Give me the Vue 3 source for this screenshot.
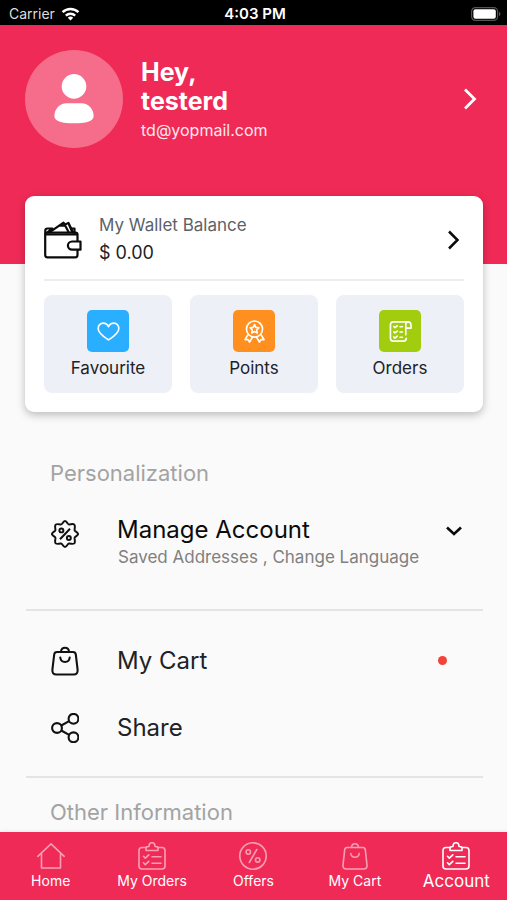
<script setup>
import { ref } from 'vue'

const active = ref('Account')
const shortcuts = [
  { label: 'Favourite', icon: 'heart', tone: 'blue' },
  { label: 'Points', icon: 'medal', tone: 'orange' },
  { label: 'Orders', icon: 'receipt', tone: 'green' },
]
const tabs = [
  { label: 'Home', icon: 'home' },
  { label: 'My Orders', icon: 'clipboard' },
  { label: 'Offers', icon: 'percent' },
  { label: 'My Cart', icon: 'bag' },
  { label: 'Account', icon: 'clipboard' },
]
</script>

<template>
  <div class="screen">
    <div class="status">
      <div class="carrier">
        <span>Carrier</span>
        <svg class="wifi" viewBox="0 0 20 15" fill="none" stroke="#fff" stroke-width="2.6">
          <path d="M1.5 5.6a12 12 0 0 1 17 0" />
          <path d="M5 9.3a7.1 7.1 0 0 1 10 0" />
          <path d="M10 14.4 7.1 11.6a4.1 4.1 0 0 1 5.8 0Z" fill="#fff" stroke="none" />
        </svg>
      </div>
      <strong class="clock">4:03 PM</strong>
      <svg class="battery" viewBox="0 0 30 14">
        <rect x=".6" y=".6" width="26" height="12.8" rx="3.8" fill="none" stroke="#555" stroke-width="1.2" />
        <rect x="2.4" y="2.2" width="22.4" height="9.6" rx="2" fill="#fff" />
        <path d="M28 4.8c2 .8 2 3.6 0 4.4Z" fill="#555" />
      </svg>
    </div>

    <header class="hero">
      <div class="avatar">
        <svg viewBox="0 0 40 50" fill="#fff">
          <circle cx="20" cy="12.4" r="12.3" />
          <path d="M12.5 29.2h15C34.5 29.2 39.6 35 39.6 42c0 5.5-8 7.3-19.6 7.3S.4 47.5.4 42c0-7 5.1-12.8 12.1-12.8Z" />
        </svg>
      </div>
      <div class="who">
        <h1>Hey,<br />testerd</h1>
        <p>td@yopmail.com</p>
      </div>
      <button class="plain" type="button" aria-label="Edit profile">
        <svg class="chev" viewBox="0 0 20 24" fill="none" stroke="#fff" stroke-width="2.8"><path d="m5 2.5 9.5 9.5L5 21.500" /></svg>
      </button>
    </header>

    <main>
      <section class="card">
        <button class="plain wallet" type="button">
          <svg class="wallet-icon" viewBox="1 0 38 38" fill="none" stroke="#0b0b0b" stroke-width="2.2" stroke-linejoin="round" stroke-linecap="round">
            <path d="M34.500 20v-6.500q0-2-2-2H4.200q-2 0-2 2V34q0 2.300 2.300 2.300H32.200q2.300 0 2.300-2.300v-5" />
            <path d="M2.500 13.300h31.500" />
            <path d="M2.300 12V9.500Q2.300 7.500 4.500 7.500h5M29 7.500h2.500V12M5 11l4-3" />
            <path d="M6.500 11.300 20.500 1.600l5.200 9.700M16.500 4.700h5.500M22.500 3.200l3-1.200 4.500 9.300M26 3.500l3 7" />
            <path d="M29 20.500h8.500v8.200H29a4.100 4.100 0 0 1 0-8.200Z" />
          </svg>
          <span class="wallet-text">
            <span class="muted">My Wallet Balance</span>
            <span class="amount">$ 0.00</span>
          </span>
          <svg class="chev" viewBox="0 0 20 24" fill="none" stroke="#0b0b0b" stroke-width="2.5"><path d="m5 3.500 8.500 8.500L5 20.500" /></svg>
        </button>
        <div class="tiles">
          <button v-for="s in shortcuts" :key="s.label" class="tile" type="button">
            <span class="badge" :class="s.tone">
              <svg viewBox="0 0 24 24" fill="none" stroke="currentColor" stroke-width="1.7" stroke-linecap="round" stroke-linejoin="round">
                <path v-if="s.icon === 'heart'" d="M12 20.800C7.800 18 1.200 13.800 1.200 8.800c0-3.200 2.400-5.600 5.200-5.600 2.500 0 4.600 1.500 5.600 3.800 1-2.300 3.100-3.800 5.600-3.800 2.800 0 5.200 2.400 5.200 5.600 0 5-6.600 9.200-10.800 12Z" />
                <g v-else-if="s.icon === 'medal'">
                  <circle cx="12" cy="9.500" r="8.400" />
                  <path d="m12 4.800 1.400 2.900 3.200.4-2.300 2.200.6 3.200-2.900-1.500-2.900 1.500.6-3.200-2.300-2.200 3.200-.4Z" />
                  <path d="m5.300 15.200-3.300 5.300 3.200-.2 1.600 2.700 3.200-5.200M18.700 15.200l3.300 5.300-3.200-.2-1.600 2.700-3.200-5.200" />
                </g>
                <g v-else>
                  <path d="M20.500 2H4.500Q1.500 2 1.500 5v14q0 3 3 3h10.500q3 0 3-3" />
                  <path d="M17.500 15.500V5q0-3 2.500-3t3 3v3.500h-5" />
                  <path d="m5 6.800 1.200 1.200L8.600 6m-3.600 6.300 1.200 1.200 2.400-2m-3.600 6.200 1.200 1.200 2.400-2M11.500 7H14M11.500 12.500H14M11.500 18H14" />
                </g>
              </svg>
            </span>
            <span>{{ s.label }}</span>
          </button>
        </div>
      </section>

      <h2>Personalization</h2>
      <section class="group first">
        <button class="plain row tall" type="button">
          <svg class="icon" viewBox="0 0 24 24" fill="none" stroke="#111" stroke-width="1.7" stroke-linejoin="round">
            <path d="M12 .8q.9 0 2.500 2.400.5.700 1.300.6Q19.200 3.100 20 4t.200 4.200q-.1.800.6 1.300Q23.200 11.100 23.200 12t-2.400 2.500q-.7.500-.6 1.300.6 3.400-.2 4.200t-4.200.2q-.8-.1-1.300.6Q12.900 23.200 12 23.200t-2.500-2.400q-.5-.7-1.300-.6-3.400.6-4.200-.2t-.2-4.200q.1-.8-.6-1.300Q.8 12.900.8 12t2.400-2.500q.7-.5.600-1.300Q3.200 4.800 4 4t4.200-.2q.8.100 1.300-.6Q11.100.8 12 .8Z" />
            <circle cx="8.900" cy="8.900" r="1.700" /><circle cx="15.300" cy="15.400" r="1.700" /><path d="m16.300 7.500-8.600 9" />
          </svg>
          <span class="row-text">
            <span class="title dark">Manage Account</span>
            <span class="sub">Saved Addresses , Change Language</span>
          </span>
          <svg class="down" viewBox="0 0 18 12" fill="none" stroke="#0b0b0b" stroke-width="2.6"><path d="m2 2.500 7 6.500 7-6.500" /></svg>
        </button>
      </section>

      <section class="group">
        <button class="plain row" type="button">
          <svg class="icon" viewBox="0 0 28 30" fill="none" stroke="#111" stroke-width="2.1" stroke-linejoin="round" stroke-linecap="round">
            <path d="M6 6h16q2.500 0 2.800 2.500l1.800 15.200q.4 4.800-4 4.800H5.400q-4.400 0-4-4.800L3.200 8.500Q3.500 6 6 6ZM10 5.500c.5-5 7.500-5 8 0M9.300 11.500c.6 6 8.800 6 9.400 0" />
          </svg>
          <span class="title">My Cart</span>
          <span class="dot" role="status" aria-label="New items"></span>
        </button>
        <button class="plain row" type="button">
          <svg class="icon" viewBox="0 0 28 30" fill="none" stroke="#111" stroke-width="2.1">
            <circle cx="6" cy="15" r="4.900" /><circle cx="22.500" cy="5.800" r="4.900" /><circle cx="22.500" cy="24.300" r="4.900" />
            <path d="m10.300 12.500 7.800-4.300M10.300 17.500l7.800 4.300" />
          </svg>
          <span class="title">Share</span>
        </button>
      </section>
      <h2 class="other">Other Information</h2>
    </main>

    <nav>
      <button v-for="t in tabs" :key="t.label" type="button" class="tab" :class="{ active: active === t.label }" @click="active = t.label">
        <svg viewBox="0 0 28 28" fill="none" stroke="currentColor" stroke-width="1.6" stroke-linecap="round" stroke-linejoin="round">
          <path v-if="t.icon === 'home'" d="M4.500 12V26h19V12M.8 14.300 14 1.800l13.200 12.500" />
          <g v-else-if="t.icon === 'clipboard'">
            <path d="M8.500 5.500H4Q1 5.500 1 8.500V24q0 3 3 3h20q3 0 3-3V8.500q0-3-3-3h-4.500" />
            <path d="M8 8.500V6q0-1.500 3-1.500c0-5 6-5 6 0q3 0 3 1.500v2.500Z" />
            <path d="m5.500 14.300 1.800 1.800 3.500-3.300m-5.300 8 1.800 1.800 3.500-3.300M14 14.800h9M14 21.300h9" />
          </g>
          <g v-else-if="t.icon === 'percent'">
            <circle cx="14" cy="14" r="13.200" /><circle cx="9.300" cy="10" r="2.200" /><circle cx="18.700" cy="18" r="2.200" /><path d="M17.800 7.500 10.300 20.500" />
          </g>
          <path v-else d="M6 5.500h16q2 0 2.300 2.200l1.700 15.500q.3 3.800-3.500 3.800h-17Q1.700 27 2 23.200L3.700 7.700Q4 5.500 6 5.500ZM10.500 5.300c.4-4.800 6.600-4.800 7 0M9.800 11.500c.6 5 7.800 5 8.400 0" />
        </svg>
        <span>{{ t.label }}</span>
      </button>
    </nav>
  </div>
</template>

<style>
body {
  margin: 0;
  background: #fafafa;
}
</style>

<style scoped>
.screen {
  display: flex;
  flex-direction: column;
  min-height: 100vh;
  font-family: Inter, "Liberation Sans", sans-serif;
  color: #202225;
}
button {
  font: inherit;
  color: inherit;
  border: 0;
  padding: 0;
  cursor: pointer;
}
svg { display: block; flex: none; }
.plain { background: none; text-align: left; }
.status {
  display: grid;
  grid-template-columns: 1fr auto 1fr;
  align-items: center;
  height: 25px;
  padding: 2px 6px 0 9px;
  box-sizing: border-box;
  background: #000;
  color: #fff;
  font-size: 14px;
}
.carrier { display: flex; align-items: center; gap: 6px; color: #ddd; }
.wifi { width: 19px; height: 14px; }
.clock { font-size: 15px; font-weight: 600; }
.battery { width: 30px; height: 14px; justify-self: end; }
.hero {
  display: flex;
  align-items: flex-start;
  padding: 25px 27px 116px 25px;
  background: #f02a57;
  color: #fff;
}
.avatar {
  display: grid;
  place-items: center;
  width: 98px;
  height: 98px;
  border-radius: 50%;
  background: #f66c8b;
}
.avatar svg { width: 40px; height: 50px; }
.who { flex: 1; padding: 8px 0 0 18px; }
h1 { margin: 0; font-size: 25px; line-height: 29px; font-weight: 700; }
.who p { margin: 4px 0 0; font-size: 16px; line-height: 20px; color: #ffe6ec; }
.hero .plain { align-self: center; }
.chev { width: 20px; height: 24px; }
main { flex: 1; }
.card {
  position: relative;
  margin: -68px 24px 0 25px;
  padding: 18px 19px 19px;
  border-radius: 9px;
  background: #fff;
  box-shadow: 0 3px 8px rgba(0, 0, 0, 0.25);
}
.wallet {
  display: flex;
  align-items: center;
  width: 100%;
  padding-bottom: 13px;
  border-bottom: 2px solid #eee;
}
.wallet-icon { width: 38px; height: 38px; }
.wallet-text { display: flex; flex: 1; flex-direction: column; padding-left: 17px; margin-top: -2px; }
.wallet-text span { font-size: 17px; line-height: 27px; }
.wallet-text .amount { font-size: 18px; }
.muted { color: #5b6268; }
.tiles { display: grid; grid-template-columns: repeat(3, 1fr); gap: 18px; padding-top: 14px; }
.tile {
  display: flex;
  flex-direction: column;
  align-items: center;
  gap: 4px;
  padding: 15px 0 13px;
  border-radius: 8px;
  background: #edf0f7;
  font-size: 17px;
  line-height: 24px;
}
.badge { display: grid; place-items: center; width: 42px; height: 42px; border-radius: 5px; color: #fff; }
.badge svg { width: 23px; height: 23px; }
.blue { background: #2aaeff; }
.orange { background: #ff9020; }
.green { background: #a2cc0e; }
h2 { margin: 47px 50px 0; font-size: 22px; line-height: 28px; font-weight: 400; color: #a3a3a3; }
.group {
  margin: 0 24px 0 26px;
  padding: 16px 0 15px;
  border-bottom: 2px solid #e4e4e4;
}
.group.first { padding: 27px 0 37px; }
.row { display: flex; align-items: center; width: 100%; height: 67px; padding: 0 20px 0 25px; box-sizing: border-box; }
.row.tall { height: 58px; align-items: flex-start; }
.icon { width: 28px; height: 30px; }
.tall .icon { margin-top: 5px; }
.row-text { display: flex; flex: 1; flex-direction: column; }
.row .title { flex: 1; font-size: 24px; line-height: 32px; padding-left: 38px; }
.title.dark { color: #0b0b0b; }
.sub { padding-left: 39px; font-size: 17px; line-height: 22px; color: #808080; }
.down { width: 18px; height: 12px; margin-top: 11px; }
.dot { width: 9px; height: 9px; margin-right: 16px; border-radius: 50%; background: #f24336; }
h2.other { margin-top: 20px; }
nav {
  position: sticky;
  bottom: 0;
  display: grid;
  grid-template-columns: repeat(5, 1fr);
  height: 68px;
  background: #f02a57;
  box-shadow: 0 -1px 4px rgba(0, 0, 0, 0.06);
}
.tab {
  display: flex;
  flex-direction: column;
  align-items: center;
  gap: 1px;
  padding-top: 10px;
  background: none;
  color: #fff;
  font-size: 14px;
  line-height: 20px;
}
.tab svg { width: 28px; height: 28px; opacity: 0.55; }
.tab.active { font-size: 17px; }
.tab.active svg { opacity: 1; }
</style>
